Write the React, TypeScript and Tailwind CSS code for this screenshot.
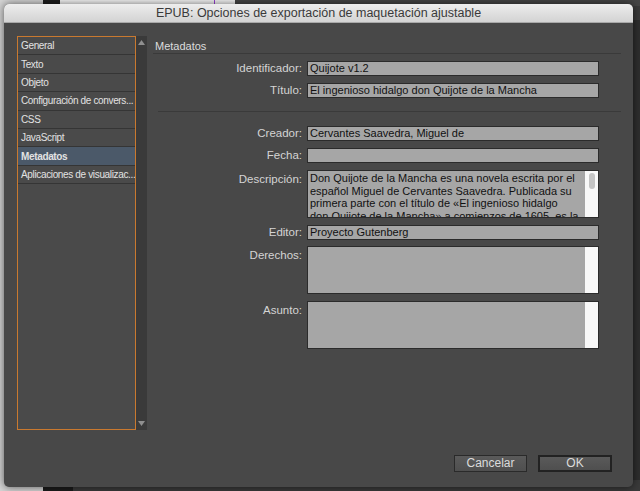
import React from "react";

// ---------------------------------------------------------------------------
// Data
// ---------------------------------------------------------------------------

const SECTIONS = [
  "General",
  "Texto",
  "Objeto",
  "Configuración de convers...",
  "CSS",
  "JavaScript",
  "Metadatos",
  "Aplicaciones de visualizac...",
];

const DESCRIPTION = [
  "Don Quijote de la Mancha es una novela escrita por el",
  "español Miguel de Cervantes Saavedra. Publicada su",
  "primera parte con el título de «El ingenioso hidalgo",
  "don Quijote de la Mancha» a comienzos de 1605, es la",
];

const FONT = "font-['Lucida_Grande','Liberation_Sans',sans-serif]";

// ---------------------------------------------------------------------------
// Small pieces
// ---------------------------------------------------------------------------

function Arrow({ up }: { up?: boolean }) {
  return (
    <svg width="7" height="5" viewBox="0 0 7 5" className="block">
      <path d={up ? "M0 5 L3.5 0 L7 5 Z" : "M0 0 L3.5 5 L7 0 Z"} fill="#8f8f8f" />
    </svg>
  );
}

function Field({ label, value }: { label: string; value?: string }) {
  return (
    <div className="flex items-center h-[15px]">
      <div className="w-[154px] pr-[5px] text-right text-[11.5px] text-[#d4d4d4]">{label}</div>
      <div className="w-[292px] h-[15px] border border-[#2b2b2b] bg-[#a6a6a6] pl-[2px] text-[11px] leading-[13px] text-[#111] whitespace-nowrap overflow-hidden">
        {value}
      </div>
    </div>
  );
}

function Area({ label, lines, thumb }: { label: string; lines?: string[]; thumb?: boolean }) {
  return (
    <div className="flex items-start h-[48px]">
      <div className="w-[154px] pr-[5px] pt-[3px] text-right text-[11.5px] leading-[13px] text-[#d4d4d4]">
        {label}
      </div>
      <div className="w-[292px] h-[48px] border border-[#2b2b2b] bg-[#a6a6a6] flex overflow-hidden">
        <div className="flex-1 pl-[2px] pt-[1px] text-[11px] leading-[12.6px] text-[#111] overflow-hidden">
          {lines?.map((l) => (
            <div key={l} className="whitespace-nowrap">
              {l}
            </div>
          ))}
        </div>
        <div className="w-[13px] bg-[#f8f8f8] flex justify-center pt-[2px]">
          {thumb && <div className="w-[6px] h-[16px] rounded-full bg-[#c4c4c4]" />}
        </div>
      </div>
    </div>
  );
}

// ---------------------------------------------------------------------------
// App
// ---------------------------------------------------------------------------

export default function App() {
  return (
    <div className={`relative w-[640px] h-[491px] overflow-hidden bg-[#3a3a3a] ${FONT}`}>
      {/* desktop behind the dialog */}
      <div className="absolute left-0 top-0 w-[43px] h-[491px] bg-[#d4d4d4]" />
      <div className="absolute left-[43px] top-0 w-[17px] h-[6px] bg-[#1f1f1f]" />
      <div className="absolute left-[60px] top-0 w-[175px] h-[6px] bg-[#f6f6f6]" />
      <div className="absolute left-[214px] top-0 w-[1px] h-[6px] bg-[#9b3fd8]" />
      <div className="absolute left-[235px] top-0 w-[405px] h-[6px] bg-[#454545]" />
      <div className="absolute left-[43px] top-[485px] w-[30px] h-[6px] bg-[#1c1c1c]" />
      <div className="absolute right-0 top-[20px] w-[7px] h-[460px] bg-[#2e2e2e]" />

      {/* dialog */}
      <div className="relative ml-[4px] mt-[4px] w-[629px] h-[483px] rounded-[5px] overflow-hidden bg-[#484848] shadow-[0_0_8px_rgba(0,0,0,0.6)] flex flex-col">
        <div className="h-[19px] shrink-0 bg-gradient-to-b from-[#ededed] to-[#d3d3d3] border-b border-[#a9a9a9] flex items-center justify-center font-['Liberation_Sans',sans-serif] text-[12.5px] text-[#3a3a3a]">
          EPUB: Opciones de exportación de maquetación ajustable
        </div>

        <div className="flex pl-[13px] pt-[13px]">
          {/* section list */}
          <div className="flex">
            <div className="w-[119px] h-[394px] border border-[#c9792f] bg-[#4a4a4a]">
              {SECTIONS.map((s) => (
                <div
                  key={s}
                  className={`h-[18.4px] border-b border-[#353535] pl-[3px] flex items-center text-[10px] tracking-[-0.35px] text-[#e2e2e2] whitespace-nowrap overflow-hidden ${
                    s === "Metadatos" ? "bg-[#4b5969] font-bold" : ""
                  }`}
                >
                  {s}
                </div>
              ))}
            </div>
            <div className="w-[11px] h-[394px] bg-[#3a3a3a] flex flex-col items-center justify-between py-[4px]">
              <Arrow up />
              <Arrow />
            </div>
          </div>

          {/* metadata panel */}
          <div className="ml-[6px] w-[468px]">
            <div className="h-[18px] border-b border-[#3a3a3a] pl-[2px] pt-[2px] text-[11px] text-[#dcdcdc]">
              Metadatos
            </div>
            <div className="mt-[7px] flex flex-col gap-[7px]">
              <Field label="Identificador:" value="Quijote v1.2" />
              <Field label="Título:" value="El ingenioso hidalgo don Quijote de la Mancha" />
            </div>
            <div className="ml-[5px] mt-[13px] h-[1px] bg-[#3a3a3a]" />
            <div className="mt-[14px] flex flex-col gap-[7px]">
              <Field label="Creador:" value="Cervantes Saavedra, Miguel de" />
              <Field label="Fecha:" />
              <Area label="Descripción:" lines={DESCRIPTION} thumb />
              <Field label="Editor:" value="Proyecto Gutenberg" />
              <div className="flex flex-col gap-[7px] -mt-[1px]">
                <Area label="Derechos:" />
                <Area label="Asunto:" />
              </div>
            </div>
          </div>
        </div>

        {/* buttons */}
        <div className="mt-[25px] flex justify-end gap-[11px] pr-[21px]">
          <button className="w-[73px] h-[17px] border border-[#2a2a2a] bg-gradient-to-b from-[#5a5a5a] to-[#4f4f4f] text-[12px] leading-[15px] text-[#dcdcdc]">
            Cancelar
          </button>
          <button className="w-[74px] h-[17px] border-2 border-[#222] bg-gradient-to-b from-[#5a5a5a] to-[#4f4f4f] text-[12px] leading-[13px] text-[#dcdcdc]">
            OK
          </button>
        </div>
      </div>
    </div>
  );
}
